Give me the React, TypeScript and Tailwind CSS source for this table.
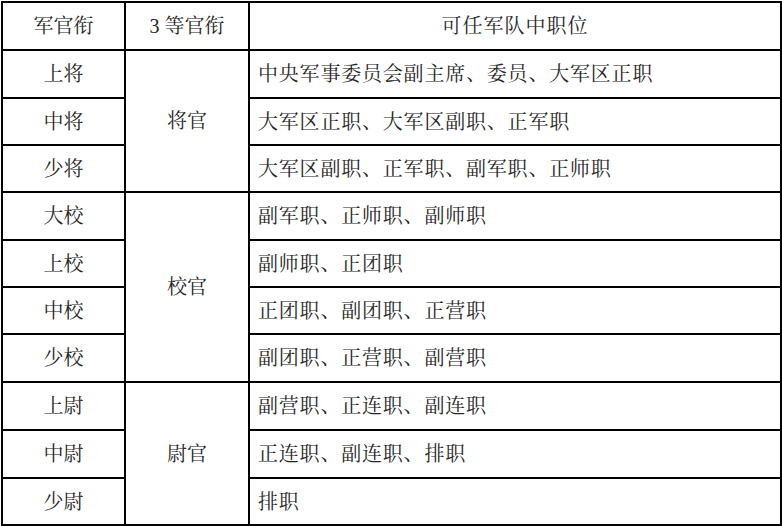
const rows = [
  { rank: "上将", group: "将官", span: 3, duty: "中央军事委员会副主席、委员、大军区正职", h: "h-[48px]" },
  { rank: "中将", duty: "大军区正职、大军区副职、正军职", h: "h-[47px]" },
  { rank: "少将", duty: "大军区副职、正军职、副军职、正师职", h: "h-[47px]" },
  { rank: "大校", group: "校官", span: 4, duty: "副军职、正师职、副师职", h: "h-[48px]" },
  { rank: "上校", duty: "副师职、正团职", h: "h-[47px]" },
  { rank: "中校", duty: "正团职、副团职、正营职", h: "h-[47px]" },
  { rank: "少校", duty: "副团职、正营职、副营职", h: "h-[48px]" },
  { rank: "上尉", group: "尉官", span: 3, duty: "副营职、正连职、副连职", h: "h-[48px]" },
  { rank: "中尉", duty: "正连职、副连职、排职", h: "h-[48px]" },
  { rank: "少尉", duty: "排职", h: "h-[47px]" },
]

export default function App() {
  return (
    <div className="bg-white w-[782px] h-[526px] pt-px pl-px font-['Liberation_Serif','Noto_Serif_CJK_SC','Noto_Sans_CJK_SC',serif] text-[20px] text-[#262626]">
      <table className="border-collapse border-2 border-black table-fixed w-[781px]">
        <colgroup>
          <col className="w-[123px]" />
          <col className="w-[124px]" />
          <col />
        </colgroup>
        <thead>
          <tr className="h-[48px]">
            <th className="border-2 border-black font-normal text-center p-0">军官衔</th>
            <th className="border-2 border-black font-normal text-center p-0">3 等官衔</th>
            <th className="border-2 border-black font-normal text-center p-0 tracking-[1px]">可任军队中职位</th>
          </tr>
        </thead>
        <tbody>
          {rows.map((r) => (
            <tr key={r.rank} className={r.h}>
              <td className="border-2 border-black text-center p-0">{r.rank}</td>
              {r.group && (
                <td rowSpan={r.span} className="border-2 border-black text-center p-0">
                  {r.group}
                </td>
              )}
              <td className="border-2 border-black pl-[8px] p-0 tracking-[0.8px]">{r.duty}</td>
            </tr>
          ))}
        </tbody>
      </table>
    </div>
  )
}
